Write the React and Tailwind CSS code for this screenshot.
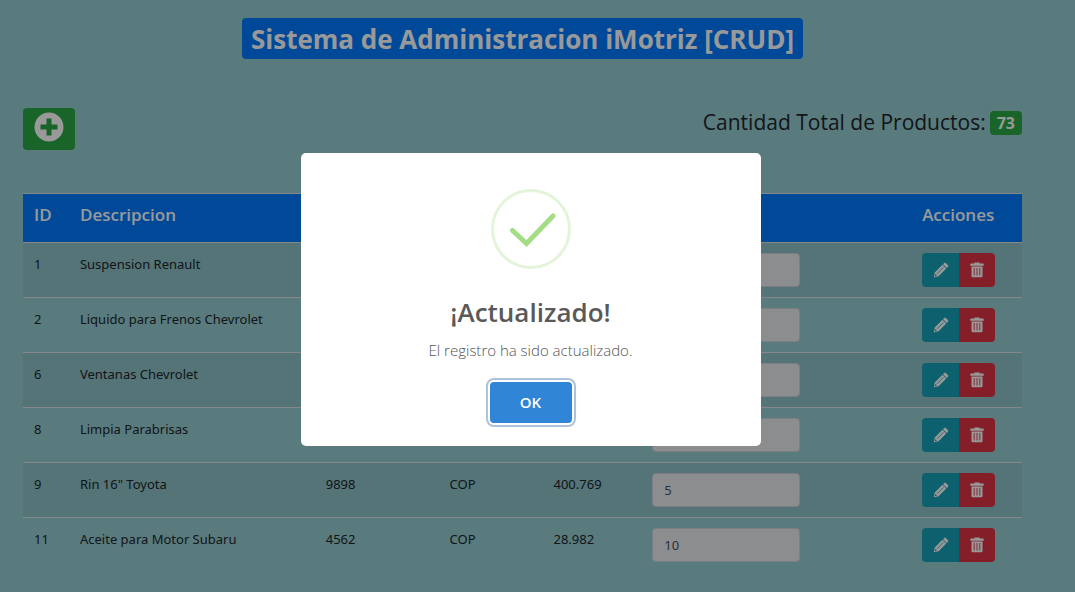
const products = [
  { id: 1, name: "Suspension Renault" },
  { id: 2, name: "Liquido para Frenos Chevrolet" },
  { id: 6, name: "Ventanas Chevrolet" },
  { id: 8, name: "Limpia Parabrisas" },
  { id: 9, name: 'Rin 16" Toyota', code: "9898", currency: "COP", price: "400.769", stock: "5" },
  { id: 11, name: "Aceite para Motor Subaru", code: "4562", currency: "COP", price: "28.982", stock: "10" },
];

function PlusCircleIcon() {
  return (
    <svg width="30" height="30" viewBox="0 0 30 30" aria-hidden="true">
      <circle cx="15" cy="15" r="14.5" fill="currentColor" />
      <path d="M6.5 15h17M15 6.500v17" stroke="#28a745" strokeWidth="5" />
    </svg>
  );
}

function PencilIcon() {
  return (
    <svg width="16" height="16" viewBox="0 0 16 16" fill="none" aria-hidden="true">
      <path d="M.8 15.200l1-4.800L9.400 2.800l3.800 3.800-7.600 7.600z" fill="#fff" />
      <path d="M10 2.200l1-1c.6-.6 1.400-.6 2 0l1.800 1.800c.6.6.6 1.400 0 2l-1 1z" fill="#fff" />
      <path d="M4 11.800l6.400-6.400" stroke="#17a2b8" strokeWidth="0.8" />
      <path d="M2.200 12l1.800 1.800-1.600.4-.6-.6z" fill="#17a2b8" />
    </svg>
  );
}

function TrashIcon() {
  return (
    <svg width="14" height="16" viewBox="0 0 14 16" fill="none" aria-hidden="true">
      <path d="M4.500 1.500V.5h5v1H13a.7.7 0 0 1 .7.7v1.600H.3V2.200a.7.7 0 0 1 .7-.7z" fill="#fff" />
      <path d="M1.500 4.500h11v9.500a1.300 1.300 0 0 1-1.300 1.300H2.800A1.300 1.300 0 0 1 1.500 14z" fill="#fff" />
      <path d="M4.200 6v7.500M7 6v7.500M9.800 6v7.500" stroke="#dc3545" strokeWidth="0.900" />
    </svg>
  );
}

function ProductRow({ product }) {
  return (
    <tr className="border-t border-[#dee2e6] align-top odd:bg-black/5">
      <td className="px-[11px] py-[10px]">{product.id}</td>
      <td className="px-[11px] py-[10px]">{product.name}</td>
      <td className="px-[11px] py-[10px]">{product.code}</td>
      <td className="px-[11px] py-[10px]">{product.currency}</td>
      <td className="px-[11px] py-[10px]">{product.price}</td>
      <td className="px-[11px] py-[10px]">
        <input
          type="text"
          readOnly
          aria-label={product.name}
          defaultValue={product.stock}
          className="block h-[34px] w-[148px] rounded border border-[#ced4da] bg-[#e9ecef] px-[11px] text-[#495057]"
        />
      </td>
      <td className="px-[11px] py-[10px]">
        <div className="flex">
          <button aria-label="Editar" className="flex h-[34px] w-[37px] items-center justify-center rounded-l bg-[#17a2b8]">
            <PencilIcon />
          </button>
          <button aria-label="Eliminar" className="flex h-[34px] w-9 items-center justify-center rounded-r bg-[#dc3545]">
            <TrashIcon />
          </button>
        </div>
      </td>
    </tr>
  );
}

function SuccessDialog() {
  return (
    <div className="fixed inset-0 flex items-center justify-center bg-black/40 py-3 pr-[26px] pl-3">
      <div
        role="dialog"
        aria-modal="true"
        aria-labelledby="dialog-title"
        className="mt-[7px] flex w-full max-w-[460px] flex-col items-center rounded-[5px] bg-white px-5 pt-9 pb-[23px]"
      >
        <svg width="80" height="80" viewBox="0 0 80 80" fill="none" aria-hidden="true">
          <circle cx="40" cy="40" r="38.500" stroke="#a5dc86" strokeOpacity="0.3" strokeWidth="3" />
          <path d="M21.500 41.500L35.500 54.500L62 27" stroke="#a5dc86" strokeWidth="5" strokeLinecap="round" />
        </svg>
        <h2 id="dialog-title" className="mt-[23px] text-[26px] leading-10 font-semibold text-[#595959]">
          ¡Actualizado!
        </h2>
        <p className="mt-2 text-[15px] leading-5 font-light text-[#545454]">El registro ha sido actualizado.</p>
        <button className="mt-[22px] h-[41px] w-[82px] rounded bg-[#3085d6] text-[15px] font-semibold text-white ring-2 ring-[#3268a5]/40 ring-offset-2">
          OK
        </button>
      </div>
    </div>
  );
}

export default function App() {
  return (
    <div className="min-h-screen bg-[#94cdd2] font-['Open_Sans','Noto_Sans',sans-serif] text-[#212529]">
      <main className="pt-[18px] pr-[53px] pl-[23px]">
        <h1 className="mx-auto w-fit rounded bg-[#007bff] px-[9px] pt-px text-[26px] leading-10 font-bold text-white">
          Sistema de Administracion iMotriz [CRUD]
        </h1>
        <div className="mt-[49px] flex items-start justify-between">
          <button aria-label="Agregar producto" className="flex h-[42px] w-[52px] justify-center rounded bg-[#28a745] pt-1 text-white">
            <PlusCircleIcon />
          </button>
          <div className="flex items-center gap-1 text-[21px] leading-[26px] font-medium">
            <span>Cantidad Total de Productos:</span>
            <span className="mt-[3px] rounded bg-[#28a745] px-[7px] text-[16px] leading-[24px] font-bold text-white">73</span>
          </div>
        </div>
        <table className="mt-[43px] w-full table-fixed border-collapse text-left font-['Noto_Sans',sans-serif] text-[13px] leading-[22px]">
          <colgroup>
            <col className="w-[4.6%]" />
            <col className="w-[24.6%]" />
            <col className="w-[12.4%]" />
            <col className="w-[10.4%]" />
            <col className="w-[9.9%]" />
            <col />
            <col className="w-[11.1%]" />
          </colgroup>
          <thead>
            <tr className="h-[49px] border-t border-[#dee2e6] bg-[#007bff] align-top font-['Open_Sans',sans-serif] text-[17px] leading-6 text-white">
              <th className="px-[11px] py-[9px] font-semibold">ID</th>
              <th className="px-[11px] py-[9px] font-semibold">Descripcion</th>
              <th />
              <th />
              <th />
              <th />
              <th className="px-[11px] py-[9px] font-semibold">Acciones</th>
            </tr>
          </thead>
          <tbody>
            {products.map((product) => (
              <ProductRow key={product.id} product={product} />
            ))}
          </tbody>
        </table>
      </main>
      <SuccessDialog />
    </div>
  );
}
